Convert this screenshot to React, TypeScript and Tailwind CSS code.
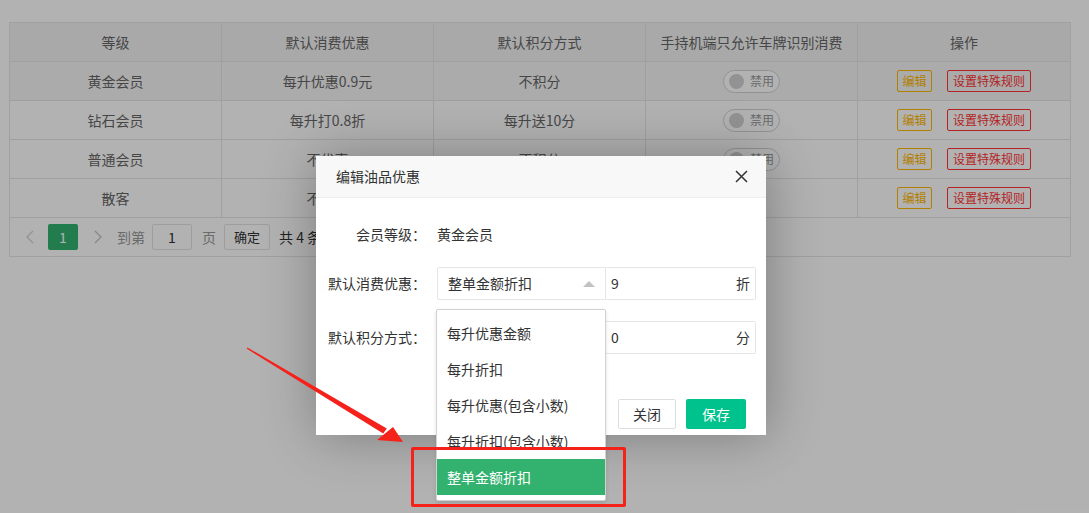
import { useState } from 'react'

interface Row {
  level: string
  discount: string
  points: string
  hover?: boolean
  toggle?: boolean
}

const rows: Row[] = [
  { level: '黄金会员', discount: '每升优惠0.9元', points: '不积分', hover: true, toggle: true },
  { level: '钻石会员', discount: '每升打0.8折', points: '每升送10分', toggle: true },
  { level: '普通会员', discount: '不优惠', points: '不积分', toggle: true },
  { level: '散客', discount: '不优惠', points: '不积分' },
]

const options = ['每升优惠金额', '每升折扣', '每升优惠(包含小数)', '每升折扣(包含小数)', '整单金额折扣']

function Switch() {
  return (
    <div className="relative flex h-[23px] w-[57px] items-center rounded-full border border-[#d2d2d2] bg-white pl-[26px]">
      <span className="absolute left-[5px] top-[3px] h-[15px] w-[15px] rounded-full bg-[#d2d2d2]" />
      <span className="text-[12px] leading-none text-[#999]">禁用</span>
    </div>
  )
}

function MemberTable() {
  return (
    <div className="ml-[9px] mt-[22px] w-[1062px] border border-[#e6e6e6] text-[14px] text-[#666]">
      {/* Header */}
      <div className="grid h-[39px] grid-cols-5 border-b border-[#e6e6e6] bg-[#f2f2f2]">
        {['等级', '默认消费优惠', '默认积分方式', '手持机端只允许车牌识别消费', '操作'].map((h, i) => (
          <div
            key={h}
            className={`flex items-center justify-center ${i < 4 ? 'border-r border-[#e6e6e6]' : ''}`}
          >
            {h}
          </div>
        ))}
      </div>

      {rows.map((r) => (
        <div
          key={r.level}
          className={`grid h-[39px] grid-cols-5 border-b border-[#e6e6e6] ${r.hover ? 'bg-[#f5f5f5]' : 'bg-white'}`}
        >
          <div className="flex items-center justify-center border-r border-[#e6e6e6]">{r.level}</div>
          <div className="flex items-center justify-center border-r border-[#e6e6e6]">{r.discount}</div>
          <div className="flex items-center justify-center border-r border-[#e6e6e6]">{r.points}</div>
          <div className="flex items-center justify-center border-r border-[#e6e6e6]">
            {r.toggle && <Switch />}
          </div>
          <div className="flex items-center justify-center gap-[15px]">
            <button className="h-[22px] w-[35px] rounded-[2px] border border-[#ffb800] text-[12px] text-[#ffb800]">
              编辑
            </button>
            <button className="h-[22px] w-[84px] rounded-[2px] border border-[#ff3333] text-[12px] text-[#ff3333]">
              设置特殊规则
            </button>
          </div>
        </div>
      ))}

      {/* Pagination */}
      <div className="flex h-[38px] items-center pl-[7px] text-[14px]">
        <svg className="ml-[9px] h-[14px] w-[8px]" viewBox="0 0 8 14" fill="none" stroke="#d2d2d2" strokeWidth={1.3}>
          <path d="M7 1L1 7l6 6" />
        </svg>
        <span className="ml-[14px] flex h-[26px] w-[30px] items-center justify-center rounded-[2px] bg-[#33b26f] text-white">
          1
        </span>
        <svg className="ml-[16px] h-[14px] w-[8px]" viewBox="0 0 8 14" fill="none" stroke="#c2c2c2" strokeWidth={1.3}>
          <path d="M1 1l6 6-6 6" />
        </svg>
        <span className="ml-[15px] text-[#999]">到第</span>
        <span className="ml-[7px] flex h-[26px] w-[40px] items-center justify-center rounded-[2px] border border-[#e2e2e2] bg-white text-[#333]">
          1
        </span>
        <span className="ml-[10px] text-[#999]">页</span>
        <span className="ml-[8px] flex h-[26px] w-[46px] items-center justify-center rounded-[2px] border border-[#e2e2e2] bg-white text-[13px] text-[#333]">
          确定
        </span>
        <span className="ml-[9px] text-[#333]">共 4 条</span>
      </div>
    </div>
  )
}

function EditDialog() {
  const [selected] = useState(4)

  return (
    <div className="absolute left-[316px] top-[156px] z-20 h-[279px] w-[450px] bg-white shadow-[1px_1px_50px_rgba(0,0,0,0.3)]">
      {/* Title */}
      <div className="flex h-[42px] items-center justify-between border-b border-[#eeeeee] bg-[#f8f8f8] pl-[20px] pr-[18px]">
        <span className="text-[14px] text-[#333]">编辑油品优惠</span>
        <svg className="h-[13px] w-[13px]" viewBox="0 0 13 13" fill="none" stroke="#333" strokeWidth={1.5}>
          <path d="M1 1l11 11M12 1L1 12" />
        </svg>
      </div>

      <div className="pt-[20px] text-[14px] text-[#333]">
        <div className="flex h-[33px] items-center">
          <div className="w-[110px] text-right">会员等级：</div>
          <div className="ml-[11px]">黄金会员</div>
        </div>

        <div className="mt-[16px] flex h-[33px] items-center">
          <div className="w-[110px] text-right">默认消费优惠：</div>
          <div className="ml-[11px] flex">
            <div className="relative flex h-[33px] w-[169px] items-center justify-between rounded-l-[2px] border border-[#e6e6e6] pl-[10px] pr-[10px]">
              <span>整单金额折扣</span>
              <span className="h-0 w-0 border-x-[6px] border-b-[6px] border-x-transparent border-b-[#c2c2c2]" />
              <div className="absolute left-[-2px] top-[41px] z-30 w-[170px] rounded-[2px] border border-[#d2d2d2] bg-white py-[5px] shadow-[0_2px_4px_rgba(0,0,0,0.12)]">
                {options.map((o, i) => (
                  <div
                    key={o}
                    className={`h-[36px] pl-[10px] leading-[36px] ${i === selected ? 'bg-[#33b26f] text-white' : 'text-[#333]'}`}
                  >
                    {o}
                  </div>
                ))}
              </div>
            </div>
            <div className="flex h-[33px] w-[150px] items-center justify-between rounded-r-[2px] border border-l-0 border-[#e6e6e6] pl-[5px] pr-[5px]">
              <span>9</span>
              <span>折</span>
            </div>
          </div>
        </div>

        <div className="mt-[21px] flex h-[33px] items-center">
          <div className="w-[110px] text-right">默认积分方式：</div>
          <div className="ml-[11px] flex">
            <div className="h-[33px] w-[169px] rounded-l-[2px] border border-[#e6e6e6]" />
            <div className="flex h-[33px] w-[150px] items-center justify-between rounded-r-[2px] border border-l-0 border-[#e6e6e6] pl-[5px] pr-[5px]">
              <span>0</span>
              <span>分</span>
            </div>
          </div>
        </div>

        <div className="mt-[45px] flex justify-end gap-[10px] pr-[20px]">
          <button className="h-[30px] w-[58px] rounded-[2px] border border-[#dedede] bg-white text-[14px] text-[#333]">
            关闭
          </button>
          <button className="h-[30px] w-[60px] rounded-[2px] bg-[#00c28c] text-[14px] text-white">保存</button>
        </div>
      </div>
    </div>
  )
}

export default function App() {
  return (
    <div className="relative h-[513px] w-[1089px] overflow-hidden bg-white font-['Noto_Sans_CJK_SC',sans-serif]">
      <MemberTable />

      {/* Modal shade */}
      <div className="absolute inset-0 z-10 bg-black/30" />

      <EditDialog />

      {/* Annotation: arrow + highlight box */}
      <svg className="pointer-events-none absolute inset-0 z-40" width="1089" height="513" viewBox="0 0 1089 513">
        <polygon points="246.6,348.6 247.4,347.4 386.8,428.6 383.2,433.6" fill="#f5211b" />
        <polygon points="403,442 377,440 393,427" fill="#f5211b" />
      </svg>
      <div className="pointer-events-none absolute left-[411px] top-[447px] z-40 h-[60px] w-[215px] rounded-[2px] border-[3px] border-[#f5211b]" />
    </div>
  )
}
